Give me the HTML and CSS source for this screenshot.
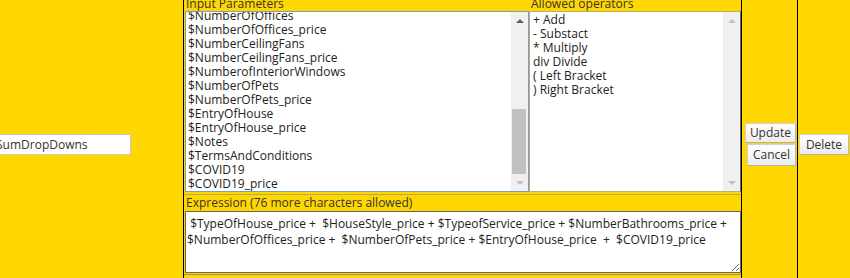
FILE: index.html
```html
<!DOCTYPE html>
<html lang="en">
  <head>
    <meta charset="UTF-8" />
    <title>Formula</title>
    <link rel="stylesheet" href="styles.css">
  </head>

  <body>
    <div class="formula-row">
      <div class="name-cell">
        <input type="text" class="name-input" value="SumDropDowns" />
      </div>

      <div class="main-cell">
        <div class="pickers">
          <div class="picker">
            <div class="picker-head"><span>Input Parameters</span></div>
            <div class="listbox params">
              <div class="list-items">
                <div>$NumberOfOffices</div>
                <div>$NumberOfOffices_price</div>
                <div>$NumberCeilingFans</div>
                <div>$NumberCeilingFans_price</div>
                <div>$NumberofInteriorWindows</div>
                <div>$NumberOfPets</div>
                <div>$NumberOfPets_price</div>
                <div>$EntryOfHouse</div>
                <div>$EntryOfHouse_price</div>
                <div>$Notes</div>
                <div>$TermsAndConditions</div>
                <div>$COVID19</div>
                <div>$COVID19_price</div>
              </div>
              <div class="scrollbar">
                <div class="arrow up"></div>
                <div class="track"></div>
                <div class="thumb"></div>
                <div class="arrow down off"></div>
              </div>
            </div>
          </div>

          <div class="picker">
            <div class="picker-head"><span>Allowed operators</span></div>
            <div class="listbox operators">
              <div class="list-items top">
                <div>+ Add</div>
                <div>- Substact</div>
                <div>* Multiply</div>
                <div>div Divide</div>
                <div>( Left Bracket</div>
                <div>) Right Bracket</div>
              </div>
              <div class="scrollbar">
                <div class="arrow up off"></div>
                <div class="track"></div>
                <div class="arrow down off"></div>
              </div>
            </div>
          </div>
        </div>

        <div class="expression">
          <div class="expression-head">Expression (76 more characters allowed)</div>
          <textarea class="expression-text"> $TypeOfHouse_price +  $HouseStyle_price + $TypeofService_price + $NumberBathrooms_price + $NumberOfOffices_price +  $NumberOfPets_price + $EntryOfHouse_price  +  $COVID19_price</textarea>
        </div>
      </div>

      <div class="btn-cell">
        <button class="btn">Update</button>
        <button class="btn cancel">Cancel</button>
      </div>

      <div class="del-cell">
        <button class="btn delete">Delete</button>
      </div>
    </div>
  </body>
</html>
```

FILE: styles.css
```css
html,
body {
  margin: 0;
  overflow: hidden;
}

body {
  font-family: "Open Sans", "Noto Sans", sans-serif;
  font-size: 12px;
  color: #333;
  background-color: #ffd700;
}

.formula-row {
  display: flex;
  height: 288px;
}

.name-cell {
  width: 183px;
  display: flex;
  align-items: center;
  justify-content: flex-end;
  padding-right: 52px;
  box-sizing: border-box;
}

.name-input {
  flex: none;
  width: 140px;
  height: 21px;
  box-sizing: border-box;
  padding: 0 4px;
  border: 1px solid #c9c9c9;
  font-family: inherit;
  font-size: 12px;
  color: #333;
  background-color: #fff;
}

.main-cell {
  width: 559px;
  border-left: 1px solid #000;
  border-right: 1px solid #000;
  box-sizing: border-box;
}

.pickers {
  display: grid;
  grid-template-columns: 345px 212px;
}

.picker-head {
  height: 11px;
  overflow: hidden;
  display: flex;
  align-items: flex-end;
  padding-left: 2px;
}

.picker-head span {
  line-height: 15px;
}

.listbox {
  display: flex;
  height: 181px;
  box-sizing: border-box;
  background-color: #fff;
}

.listbox.params {
  margin-left: 1px;
  border: 1px solid #7f9db9;
}

.listbox.operators {
  border: 1px solid #b4ae84;
  border-right-color: #6e6a50;
}

.list-items {
  flex: 1;
  overflow: hidden;
  display: flex;
  flex-direction: column;
  justify-content: flex-end;
  padding-left: 2px;
  line-height: 14px;
  color: #222;
  white-space: nowrap;
}

.list-items.top {
  justify-content: flex-start;
  padding-top: 1px;
  padding-left: 3px;
}

.scrollbar {
  width: 17px;
  display: flex;
  flex-direction: column;
  background-color: #f0f0f0;
}

.track {
  flex: 1;
}

.thumb {
  height: 65px;
  margin: 0 2px 0 1px;
  background-color: #c1c1c1;
}

.arrow {
  height: 17px;
  display: flex;
  align-items: center;
  justify-content: center;
}

.arrow::before {
  content: "";
  border-left: 4px solid transparent;
  border-right: 4px solid transparent;
}

.arrow.up::before {
  border-bottom: 4px solid #606060;
}

.arrow.down::before {
  border-top: 4px solid #606060;
}

.arrow.up.off::before {
  border-bottom-color: #c0c0c0;
}

.arrow.down.off::before {
  border-top-color: #c0c0c0;
}

.expression {
  margin-top: 2px;
  border-top: 1px solid #b8a858;
  border-bottom: 1px solid #9a9070;
  padding-bottom: 1px;
}

.expression-head {
  height: 16px;
  line-height: 16px;
  padding-left: 2px;
}

.expression-text {
  display: block;
  width: 556px;
  height: 62px;
  margin-left: 1px;
  box-sizing: border-box;
  padding: 4px 1px;
  border: 1px solid #666;
  font-family: inherit;
  font-size: 12px;
  line-height: 16px;
  color: #222;
  resize: vertical;
  white-space: pre-wrap;
}

.btn-cell {
  width: 56px;
  border-right: 1px solid #000;
  box-sizing: border-box;
  display: flex;
  flex-direction: column;
  align-items: flex-end;
  justify-content: center;
  padding-right: 1px;
}

.del-cell {
  flex: 1;
  display: flex;
  align-items: center;
  padding-left: 1px;
}

.btn {
  height: 20px;
  padding: 0 4px;
  border: 1px solid #d0d0d0;
  border-right-color: #b8b8b8;
  border-bottom-color: #b0b0b0;
  background: linear-gradient(#ffffff, #ececec);
  font-family: inherit;
  font-size: 12px;
  color: #333;
  cursor: pointer;
}

.btn.cancel {
  width: 49px;
  height: 22px;
  margin-top: 1px;
}

.btn.delete {
  width: 50px;
  height: 21px;
}
```
